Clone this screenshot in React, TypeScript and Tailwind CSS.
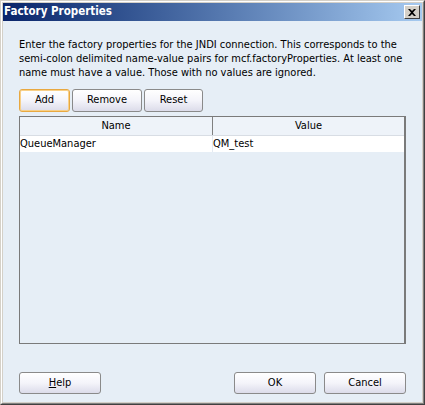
import React from "react";

const font = { fontFamily: '"DejaVu Sans Condensed", "Liberation Sans", Arial, sans-serif' };

function Btn({ label, w, h, focused, underline }: { label: string; w: string; h: string; focused?: boolean; underline?: boolean }) {
  return (
    <div
      className={`${w} ${h} flex items-center justify-center rounded-[3px] border text-[11px] text-black bg-gradient-to-b from-[#ffffff] via-[#f4f4fa] to-[#dcdcea] ${
        focused ? "border-[#e8a840] shadow-[inset_0_0_0_1px_#f8d088]" : "border-[#8a8a8a]"
      }`}
    >
      {underline ? (
        <span>
          <span className="underline">{label[0]}</span>
          {label.slice(1)}
        </span>
      ) : (
        label
      )}
    </div>
  );
}

export default function App() {
  return (
    <div className="w-[425px] h-[405px] overflow-hidden" style={font}>
      <div className="w-full h-full border-t border-l border-t-[#d4d0c8] border-l-[#d4d0c8] border-r border-b border-r-[#404040] border-b-[#404040]">
        <div className="w-full h-full border-t border-l border-t-white border-l-white border-r border-b border-r-[#808080] border-b-[#808080] bg-[#d4d0c8] p-px flex flex-col">
          <div className="h-[18px] flex items-center justify-between bg-gradient-to-r from-[#0a246a] to-[#a6caf0] pl-[1px] pr-[2px]">
            <span className="text-white font-bold text-[11.5px] leading-none">Factory Properties</span>
            <div className="w-[16px] h-[14px] bg-[#d4d0c8] border-t border-l border-t-white border-l-white border-r border-b border-r-[#404040] border-b-[#404040] flex items-center justify-center">
              <svg width="8" height="7" viewBox="0 0 8 7">
                <path d="M0 0h2l2 2 2-2h2L5 3.5 8 7H6L4 5 2 7H0l3-3.5z" fill="#000" />
              </svg>
            </div>
          </div>
          <div className="flex-1 bg-[#e6eef6] flex flex-col px-[16px]">
            <p className="mt-[17px] text-[11px] leading-[14px] text-black whitespace-nowrap">
              Enter the factory properties for the JNDI connection. This corresponds to the
              <br />
              semi-colon delimited name-value pairs for mcf.factoryProperties. At least one
              <br />
              name must have a value. Those with no values are ignored.
            </p>
            <div className="flex gap-[2px] mt-[9px]">
              <Btn label="Add" w="w-[51px]" h="h-[23px]" focused />
              <Btn label="Remove" w="w-[70px]" h="h-[23px]" />
              <Btn label="Reset" w="w-[59px]" h="h-[23px]" />
            </div>
            <div className="mt-[4px] h-[228px] border border-[#7a7a7a] border-r-2 flex flex-col">
              <div className="flex h-[19px] bg-[#eef3f9] border-b border-[#d8dde4] text-[11px]">
                <div className="w-[193px] flex items-center justify-center border-r border-[#808080]">Name</div>
                <div className="flex-1 flex items-center justify-center">Value</div>
              </div>
              <div className="flex h-[16px] bg-white text-[11px]">
                <div className="w-[193px] flex items-center border-r border-[#e4eaf2]">QueueManager</div>
                <div className="flex-1 flex items-center">QM_test</div>
              </div>
            </div>
            <div className="flex mt-[28px]">
              <Btn label="Help" w="w-[82px]" h="h-[22px]" underline />
              <div className="flex-1" />
              <Btn label="OK" w="w-[82px]" h="h-[22px]" />
              <div className="w-[8px]" />
              <Btn label="Cancel" w="w-[82px]" h="h-[22px]" />
            </div>
          </div>
        </div>
      </div>
    </div>
  );
}
